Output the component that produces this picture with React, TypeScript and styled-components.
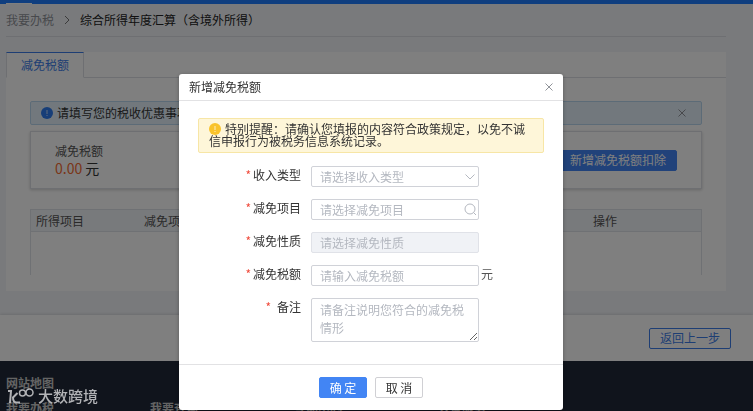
import React from "react";
import styled, { createGlobalStyle, css } from "styled-components";

const Global = createGlobalStyle`
  *, *::before, *::after { box-sizing: border-box; }
  body {
    margin: 0;
    background: #f3f5f9;
    color: #333;
    font: 12px/18px "Noto Sans CJK SC", sans-serif;
  }
  button, input, select, textarea { font: inherit; margin: 0; }
`;

const Page = styled.div`
  display: flex;
  flex-direction: column;
  height: 100vh;
  overflow: hidden;
`;
const TopBar = styled.header`
  display: flex;
  flex: none;
  align-items: flex-end;
  height: 4px;
  padding-left: 6px;
  background: #1f7cff;
`;
const TopMark = styled.span`
  width: 26px;
  height: 1px;
  background: #fff;
`;
const Content = styled.main`
  flex: none;
  margin: 0 27px 24px 6px;
`;
const Crumbs = styled.nav`
  display: flex;
  align-items: center;
  gap: 10px;
  height: 33px;
  margin-bottom: 15px;
  border-bottom: 1px solid #dcdfe4;
  color: #222;
`;
const CrumbLink = styled.a`
  color: #909399;
  text-decoration: none;
`;
const Panel = styled.section`
  background: #fff;
`;
const Tabs = styled.div`
  display: flex;
  height: 26px;
  border-bottom: 1px solid #dcdfe4;
`;
const Tab = styled.button`
  height: 26px;
  padding: 0 14px;
  border: 1px solid #dcdfe4;
  border-top: 1px solid #3d7de8;
  border-bottom-color: #fff;
  background: #fff;
  color: #3d7de8;
`;
const PanelBody = styled.div`
  padding: 23px 24px 16px;
`;
const Info = styled.div`
  display: flex;
  align-items: center;
  gap: 4px;
  height: 24px;
  margin-bottom: 6px;
  padding: 0 14px 0 10px;
  border: 1px solid #b9d7ef;
  border-radius: 2px;
  background: #e4f1fb;
`;
const InfoText = styled.span`
  flex: 1;
`;
const IconButton = styled.button`
  display: flex;
  padding: 0;
  border: 0;
  background: none;
  color: #909399;
`;
const Summary = styled.div`
  display: flex;
  align-items: center;
  justify-content: space-between;
  height: 58px;
  margin-bottom: 20px;
  padding: 0 24px;
  border: 1px solid #dcdfe4;
  box-shadow: 0 1px 3px rgba(0, 0, 0, 0.2);
`;
const SummaryLabel = styled.div`
  color: #555;
  line-height: 16px;
`;
const Amount = styled.div`
  font-size: 14px;
  line-height: 18px;
`;
const AmountValue = styled.span`
  color: #f56c32;
`;

const Button = styled.button<{ $kind: "primary" | "plain" | "outline" }>`
  height: 21px;
  padding: 0 10px;
  border: 1px solid;
  border-radius: 2px;
  line-height: 18px;
  white-space: nowrap;
  ${({ $kind }) =>
    $kind === "primary"
      ? css`border-color: #4285f4; background: #4285f4; color: #fff;`
      : $kind === "outline"
        ? css`border-color: #3d7de8; background: #fff; color: #3d7de8;`
        : css`border-color: #d0d0d4; background: #fff; color: #333;`}
`;

const Table = styled.table`
  width: 100%;
  height: 66px;
  table-layout: fixed;
  border-collapse: separate;
  border-spacing: 0;
  border: 1px solid #dfe3e8;
  border-bottom: 0;
`;
const Th = styled.th<{ $width?: number }>`
  width: ${({ $width }) => ($width ? `${$width}px` : "auto")};
  height: 22px;
  padding: 0 5px;
  border-bottom: 1px solid #dfe3e8;
  background: #f0f4f8;
  color: #555;
  font-weight: 400;
  text-align: left;
`;
const Td = styled.td`
  padding: 0;
`;
const ActionBar = styled.div`
  display: flex;
  flex: none;
  align-items: center;
  justify-content: flex-end;
  height: 46px;
  padding-right: 22px;
  background: #fff;
  box-shadow: 0 -1px 3px rgba(0, 0, 0, 0.12);
`;
const SiteFooter = styled.footer`
  flex: none;
  padding: 13px 6px;
  background: #202838;
  color: #c8c8c8;
  font-weight: 700;
`;
const SiteMap = styled.div`
  display: grid;
  grid-template-columns: repeat(4, 144px);
  margin-top: 7px;
`;

const Overlay = styled.div`
  position: fixed;
  inset: 0;
  display: flex;
  align-items: flex-start;
  justify-content: center;
  padding: 74px 11px 0 0;
  background: rgba(0, 0, 0, 0.5);
`;
const Dialog = styled.section`
  width: 384px;
  max-width: 100%;
  border-radius: 3px;
  background: #fff;
  box-shadow: 0 1px 4px rgba(0, 0, 0, 0.3);
`;
const DialogHead = styled.header`
  display: flex;
  align-items: center;
  justify-content: space-between;
  height: 27px;
  padding: 0 9px 0 10px;
  border-bottom: 1px solid #e2e2e4;
`;
const Title = styled.h2`
  margin: 0;
  font-size: 12px;
  font-weight: 400;
`;
const DialogBody = styled.div`
  padding: 17px 19px 22px;
`;
const Notice = styled.p`
  margin: 0 0 13px;
  padding: 4px 10px 5px;
  border: 1px solid #f7e6a6;
  border-radius: 2px;
  background: #fef6d9;
  line-height: 12px;
`;
const NoticeIcon = styled.span`
  display: inline-block;
  height: 12px;
  margin-right: 4px;
  vertical-align: top;
`;
const Form = styled.form`
  display: grid;
  gap: 12px;
`;
const Row = styled.div`
  display: grid;
  grid-template-columns: 103px 168px auto;
  column-gap: 10px;
  align-items: start;
`;
const Label = styled.label`
  line-height: 17px;
  text-align: right;
  white-space: nowrap;
`;
const Required = styled.span<{ $wide?: boolean }>`
  margin-right: ${({ $wide }) => ($wide ? 6 : 2)}px;
  color: #f04b3c;
`;
const Field = styled.div`
  display: grid;
  align-items: center;
`;
const boxStyle = css`
  grid-area: 1 / 1;
  width: 100%;
  padding: 0 8px;
  border: 1px solid #d0d2d8;
  border-radius: 2px;
  background: #fff;
  color: #b4b8c0;
  outline: 0;
  &::placeholder { color: #b4b8c0; opacity: 1; }
`;
const Input = styled.input`
  ${boxStyle}
  height: 21px;
  &:disabled { border-color: #e0e2e8; background: #f0f2f6; }
`;
const Select = styled.select`
  ${boxStyle}
  height: 21px;
  appearance: none;
`;
const TextArea = styled.textarea`
  ${boxStyle}
  display: block;
  height: 44px;
  padding: 2px 8px;
  line-height: 18px;
  overflow: hidden;
  resize: both;
`;
const FieldIcon = styled.span`
  display: flex;
  grid-area: 1 / 1;
  justify-self: end;
  margin-right: 2px;
  color: #b4b8c0;
  pointer-events: none;
`;
const Unit = styled.span`
  margin-left: -8px;
  color: #555;
`;
const DialogFoot = styled.footer`
  display: flex;
  justify-content: center;
  gap: 8px;
  padding: 12px 0;
  border-top: 1px solid #e2e2e4;
`;
const DialogButton = styled(Button)`
  width: 48px;
  padding: 0;
`;
const Brand = styled.div`
  position: fixed;
  bottom: 5px;
  left: 8px;
  display: flex;
  align-items: center;
  gap: 3px;
  color: #b2b3b6;
  font-size: 15px;
  font-weight: 500;
  line-height: 20px;
`;

const Cross = () => (
  <svg width="10" height="10" viewBox="0 0 10 10" fill="none" stroke="currentColor" aria-hidden="true">
    <path d="M1.500 1.500l7 7M8.500 1.500l-7 7" />
  </svg>
);
const AlertIcon = ({ color }: { color: string }) => (
  <svg width="12" height="12" viewBox="0 0 12 12" aria-hidden="true">
    <circle cx="6" cy="6" r="6" fill={color} />
    <path d="M6 3v4M6 8v1" stroke="#fff" strokeOpacity="0.7" />
  </svg>
);
const Star = ({ wide }: { wide?: boolean }) => <Required $wide={wide}>*</Required>;

export default function App() {
  return (
    <>
      <Global />
      <Page>
        <TopBar><TopMark /></TopBar>
        <Content>
          <Crumbs aria-label="breadcrumb">
            <CrumbLink href="#">我要办税</CrumbLink>
            <svg width="6" height="10" viewBox="0 0 6 10" fill="none" stroke="#777" aria-hidden="true">
              <path d="M1 1l4 4-4 4" />
            </svg>
            <span>综合所得年度汇算（含境外所得）</span>
          </Crumbs>
          <Panel>
            <Tabs role="tablist"><Tab role="tab" aria-selected="true">减免税额</Tab></Tabs>
            <PanelBody>
              <Info>
                <AlertIcon color="#2f7df0" />
                <InfoText>请填写您的税收优惠事项</InfoText>
                <IconButton aria-label="关闭提示"><Cross /></IconButton>
              </Info>
              <Summary>
                <div>
                  <SummaryLabel>减免税额</SummaryLabel>
                  <Amount><AmountValue>0.00</AmountValue> 元</Amount>
                </div>
                <Button $kind="primary">新增减免税额扣除</Button>
              </Summary>
              <Table>
                <thead>
                  <tr>
                    <Th $width={108}>所得项目</Th>
                    <Th>减免项目</Th>
                    <Th>减免性质</Th>
                    <Th>减免税额</Th>
                    <Th $width={113}>操作</Th>
                  </tr>
                </thead>
                <tbody><tr><Td colSpan={5} /></tr></tbody>
              </Table>
            </PanelBody>
          </Panel>
        </Content>
        <ActionBar><Button $kind="outline">返回上一步</Button></ActionBar>
        <SiteFooter>
          <div>网站地图</div>
          <SiteMap>
            <span>我要办税</span>
            <span>我要查询</span>
            <span>互动中心</span>
            <span>公众服务</span>
          </SiteMap>
        </SiteFooter>
      </Page>

      <Overlay>
        <Dialog role="dialog" aria-modal="true" aria-labelledby="dialog-title">
          <DialogHead>
            <Title id="dialog-title">新增减免税额</Title>
            <IconButton aria-label="关闭"><Cross /></IconButton>
          </DialogHead>
          <DialogBody>
            <Notice>
              <NoticeIcon><AlertIcon color="#f9c32b" /></NoticeIcon>
              特别提醒：请确认您填报的内容符合政策规定，以免不诚信申报行为被税务信息系统记录。
            </Notice>
            <Form id="relief-form">
              <Row>
                <Label htmlFor="income"><Star />收入类型</Label>
                <Field>
                  <Select id="income" defaultValue=""><option value="">请选择收入类型</option></Select>
                  <FieldIcon>
                    <svg width="14" height="12" viewBox="0 0 14 12" fill="none" stroke="currentColor" aria-hidden="true">
                      <path d="M2.500 3.500L7 8l4.500-4.500" />
                    </svg>
                  </FieldIcon>
                </Field>
              </Row>
              <Row>
                <Label htmlFor="item"><Star />减免项目</Label>
                <Field>
                  <Input id="item" placeholder="请选择减免项目" />
                  <FieldIcon>
                    <svg width="13" height="13" viewBox="0 0 13 13" fill="none" stroke="currentColor" aria-hidden="true">
                      <circle cx="6" cy="6" r="5" />
                      <path d="M9.500 9.500L12 12" />
                    </svg>
                  </FieldIcon>
                </Field>
              </Row>
              <Row>
                <Label htmlFor="nature"><Star />减免性质</Label>
                <Field><Input id="nature" placeholder="请选择减免性质" disabled /></Field>
              </Row>
              <Row>
                <Label htmlFor="amount"><Star />减免税额</Label>
                <Field><Input id="amount" placeholder="请输入减免税额" /></Field>
                <Unit>元</Unit>
              </Row>
              <Row>
                <Label htmlFor="remark"><Star wide />备注</Label>
                <Field><TextArea id="remark" placeholder="请备注说明您符合的减免税情形" /></Field>
              </Row>
            </Form>
          </DialogBody>
          <DialogFoot>
            <DialogButton $kind="primary" form="relief-form" type="button">确 定</DialogButton>
            <DialogButton $kind="plain" type="button">取 消</DialogButton>
          </DialogFoot>
        </Dialog>
      </Overlay>

      <Brand>
        <svg width="27" height="17" viewBox="0 0 27 17" fill="none" stroke="currentColor" aria-hidden="true">
          <path d="M0 3h3l-1 12M9.500 5L5 9.500q0 5 3.500 5H12" strokeWidth="2" />
          <circle cx="14.500" cy="5" r="3" strokeWidth="1.500" />
          <circle cx="21.500" cy="4.500" r="3.500" strokeWidth="1.500" />
        </svg>
        <span>大数跨境</span>
      </Brand>
    </>
  );
}
